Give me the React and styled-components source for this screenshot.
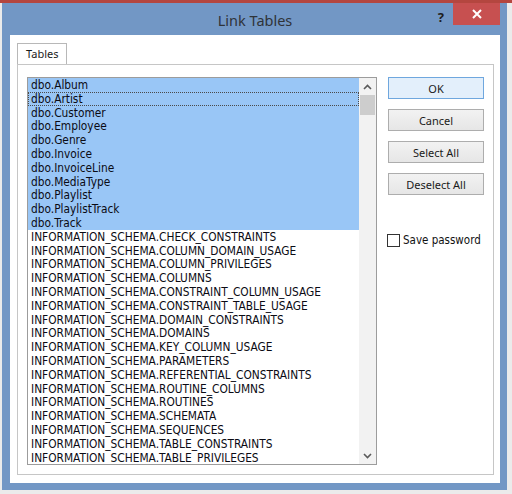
import React from "react";
import styled, { createGlobalStyle } from "styled-components";

const GlobalStyle = createGlobalStyle`
  html, body { margin: 0; padding: 0; }
  body { background: #ebebeb; overflow: hidden; }
  * { box-sizing: border-box; }
`;

const Screen = styled.div`
  width: 512px;
  height: 494px;
  display: flex;
  flex-direction: column;
  background: #ebebeb;
`;

const TopStrip = styled.div`
  height: 3px;
  background: #b4463f;
  flex: none;
`;

const Stage = styled.div`
  flex: 1;
  display: flex;
  padding: 0 5px 4px 2px;
`;

const Window = styled.div`
  flex: 1;
  display: flex;
  flex-direction: column;
  background: #7297c5;
  padding: 0 7px 7px 8px;
`;

const TitleBar = styled.div`
  height: 32px;
  display: grid;
  grid-template-columns: 1fr auto 1fr;
  align-items: start;
  flex: none;
`;

const Title = styled.div`
  grid-column: 2;
  font-family: "Noto Sans", "Open Sans", sans-serif;
  font-size: 14.5px;
  color: #2f3338;
  line-height: 20px;
  padding-top: 7px;
`;

const Controls = styled.div`
  grid-column: 3;
  justify-self: end;
  display: flex;
  align-items: flex-start;
  gap: 9px;
`;

const HelpGlyph = styled.span`
  font-family: "Noto Sans", sans-serif;
  font-weight: 700;
  font-size: 13px;
  color: #1e1e1e;
  line-height: 16px;
  padding-top: 6px;
`;

const CloseButton = styled.div`
  width: 47px;
  height: 22px;
  background: #c75050;
  display: flex;
  align-items: center;
  justify-content: center;
`;

const Client = styled.div`
  flex: 1;
  background: #ffffff;
  display: flex;
  flex-direction: column;
  padding: 8px 6px 8px 7px;
`;

const TabStrip = styled.div`
  display: flex;
  flex: none;
`;

const Tab = styled.div`
  height: 22px;
  margin-bottom: -1px;
  padding: 0 8px;
  border: 1px solid #b8b8b8;
  border-bottom: none;
  background: #ffffff;
  font-family: "Noto Sans", sans-serif;
  font-size: 11px;
  color: #1a1a1a;
  line-height: 20px;
`;

const Panel = styled.div`
  flex: 1;
  border: 1px solid #c6c6c6;
  display: flex;
  gap: 11px;
  padding: 12px 9px 8px 9px;
`;

const ListBox = styled.div`
  width: 350px;
  height: 388px;
  border: 1px solid #9c9c9c;
  display: flex;
  overflow: hidden;
  background: #fff;
`;

const Items = styled.div`
  flex: 1;
  overflow: hidden;
`;

const Item = styled.div`
  height: 13.8px;
  line-height: 13.8px;
  padding: 1px 0 0 3px;
  font-family: "DejaVu Sans Condensed", "Liberation Sans", sans-serif;
  font-size: 11.8px;
  color: #0b0b14;
  white-space: nowrap;
  background: ${(p) => (p.$selected ? "#99c6f6" : "transparent")};
  outline: ${(p) => (p.$focused ? "1px dotted #4a4a4a" : "none")};
  outline-offset: -1px;
`;

const ScrollBar = styled.div`
  width: 17px;
  flex: none;
  background: #f2f2f2;
  display: flex;
  flex-direction: column;
`;

const ArrowBox = styled.div`
  height: 17px;
  display: flex;
  align-items: center;
  justify-content: center;
  flex: none;
`;

const Thumb = styled.div`
  height: 20px;
  margin: 0 1px;
  background: #cdcdcd;
  flex: none;
`;

const Track = styled.div`
  flex: 1;
`;

const SideColumn = styled.div`
  width: 96px;
  display: flex;
  flex-direction: column;
  gap: 10px;
`;

const Button = styled.div`
  height: 22px;
  border: 1px solid ${(p) => (p.$default ? "#6fa7de" : "#adadad")};
  background: ${(p) => (p.$default ? "#e3effb" : "linear-gradient(#f2f2f2, #e6e6e6)")};
  display: flex;
  align-items: center;
  justify-content: center;
  font-family: "Noto Sans", sans-serif;
  font-size: 11px;
  color: #1a1a1a;
`;

const CheckRow = styled.label`
  margin-top: 28px;
  margin-left: -1px;
  display: flex;
  align-items: center;
  gap: 3px;
  font-family: "DejaVu Sans Condensed", "Liberation Sans", sans-serif;
  font-size: 11.5px;
  color: #111;
`;

const CheckBox = styled.span`
  width: 13px;
  height: 13px;
  border: 1px solid #333;
  background: #fff;
  flex: none;
`;

const Chevron = ({ up }) => (
  <svg width="9" height="6" viewBox="0 0 9 6">
    <path
      d={up ? "M1 5 L4.5 1.5 L8 5" : "M1 1 L4.5 4.5 L8 1"}
      fill="none"
      stroke="#5a5a5a"
      strokeWidth="1.6"
    />
  </svg>
);

const items = [
  "dbo.Album",
  "dbo.Artist",
  "dbo.Customer",
  "dbo.Employee",
  "dbo.Genre",
  "dbo.Invoice",
  "dbo.InvoiceLine",
  "dbo.MediaType",
  "dbo.Playlist",
  "dbo.PlaylistTrack",
  "dbo.Track",
  "INFORMATION_SCHEMA.CHECK_CONSTRAINTS",
  "INFORMATION_SCHEMA.COLUMN_DOMAIN_USAGE",
  "INFORMATION_SCHEMA.COLUMN_PRIVILEGES",
  "INFORMATION_SCHEMA.COLUMNS",
  "INFORMATION_SCHEMA.CONSTRAINT_COLUMN_USAGE",
  "INFORMATION_SCHEMA.CONSTRAINT_TABLE_USAGE",
  "INFORMATION_SCHEMA.DOMAIN_CONSTRAINTS",
  "INFORMATION_SCHEMA.DOMAINS",
  "INFORMATION_SCHEMA.KEY_COLUMN_USAGE",
  "INFORMATION_SCHEMA.PARAMETERS",
  "INFORMATION_SCHEMA.REFERENTIAL_CONSTRAINTS",
  "INFORMATION_SCHEMA.ROUTINE_COLUMNS",
  "INFORMATION_SCHEMA.ROUTINES",
  "INFORMATION_SCHEMA.SCHEMATA",
  "INFORMATION_SCHEMA.SEQUENCES",
  "INFORMATION_SCHEMA.TABLE_CONSTRAINTS",
  "INFORMATION_SCHEMA.TABLE_PRIVILEGES",
];

export default function App() {
  return (
    <>
      <GlobalStyle />
      <Screen>
        <TopStrip />
        <Stage>
          <Window>
            <TitleBar>
              <Title>Link Tables</Title>
              <Controls>
                <HelpGlyph>?</HelpGlyph>
                <CloseButton>
                  <svg width="10" height="10" viewBox="0 0 10 10">
                    <path d="M1 1 L9 9 M9 1 L1 9" stroke="#fff" strokeWidth="2" />
                  </svg>
                </CloseButton>
              </Controls>
            </TitleBar>
            <Client>
              <TabStrip>
                <Tab>Tables</Tab>
              </TabStrip>
              <Panel>
                <ListBox>
                  <Items>
                    {items.map((name, i) => (
                      <Item key={name} $selected={i < 11} $focused={i === 1}>
                        {name}
                      </Item>
                    ))}
                  </Items>
                  <ScrollBar>
                    <ArrowBox>
                      <Chevron up />
                    </ArrowBox>
                    <Thumb />
                    <Track />
                    <ArrowBox>
                      <Chevron />
                    </ArrowBox>
                  </ScrollBar>
                </ListBox>
                <SideColumn>
                  <Button $default>OK</Button>
                  <Button>Cancel</Button>
                  <Button>Select All</Button>
                  <Button>Deselect All</Button>
                  <CheckRow>
                    <CheckBox />
                    Save password
                  </CheckRow>
                </SideColumn>
              </Panel>
            </Client>
          </Window>
        </Stage>
      </Screen>
    </>
  );
}
